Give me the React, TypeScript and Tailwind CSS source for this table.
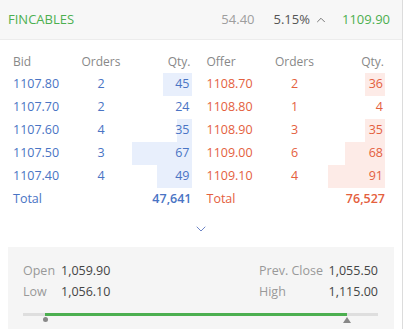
import { ChevronDown, ChevronUp } from "lucide-react";

const bids = [
  { price: "1107.80", orders: 2, qty: 45, bar: 29 },
  { price: "1107.70", orders: 2, qty: 24, bar: 0 },
  { price: "1107.60", orders: 4, qty: 35, bar: 15 },
  { price: "1107.50", orders: 3, qty: 67, bar: 60 },
  { price: "1107.40", orders: 4, qty: 49, bar: 35 },
];

const offers = [
  { price: "1108.70", orders: 2, qty: 36, bar: 20 },
  { price: "1108.80", orders: 1, qty: 4, bar: 0 },
  { price: "1108.90", orders: 3, qty: 35, bar: 20 },
  { price: "1109.00", orders: 6, qty: 68, bar: 40 },
  { price: "1109.10", orders: 4, qty: 91, bar: 57 },
];

type Row = { price: string; orders: number; qty: number; bar: number };

function Side({ title, rows, total, text, bar }: { title: string; rows: Row[]; total: string; text: string; bar: string }) {
  return (
    <div className="flex flex-col">
      <div className="grid h-[23px] grid-cols-[60px_56px_1fr] items-center text-[12px] text-[#888]">
        <span>{title}</span>
        <span className="text-center">Orders</span>
        <span className="pr-[1px] text-right">Qty.</span>
      </div>
      {rows.map((r) => (
        <div key={r.price} className={`grid h-[23px] grid-cols-[60px_56px_1fr] items-center ${text}`}>
          <span>{r.price}</span>
          <span className="text-center">{r.orders}</span>
          <span className="relative flex h-full items-center justify-end">
            <span className={`absolute top-0 right-0 bottom-0 ${bar}`} style={{ width: r.bar }} />
            <span className="relative pr-[2px]">{r.qty}</span>
          </span>
        </div>
      ))}
      <div className={`flex h-[23px] items-center justify-between ${text}`}>
        <span>Total</span>
        <span className="font-semibold">{total}</span>
      </div>
    </div>
  );
}

export default function App() {
  return (
    <div className="h-[329px] w-[406px] bg-white font-['Open_Sans',sans-serif] text-[12.5px]">
      <div className="flex h-full w-[403px] flex-col border-r border-[#dcdcdc]">
        <div className="flex h-[40px] items-center border-b border-[#ececec] bg-[#f7f7f7] pr-[12px] pl-[8px] text-[13px]">
          <span className="text-[#4caf50]">FINCABLES</span>
          <span className="ml-auto text-[#9e9e9e]">54.40</span>
          <span className="ml-[19px] text-[#555]">5.15%</span>
          <ChevronUp className="ml-[4px] h-[14px] w-[14px] text-[#666]" strokeWidth={1.5} />
          <span className="ml-[14px] text-[#4caf50]">1109.90</span>
        </div>

        <div className="mt-[10px] grid grid-cols-2 gap-[15px] pr-[17px] pl-[13px]">
          <Side title="Bid" rows={bids} total="47,641" text="text-[#4a74c4]" bar="bg-[#e8effc]" />
          <Side title="Offer" rows={offers} total="76,527" text="text-[#e4603e]" bar="bg-[#fdebe7]" />
        </div>

        <div className="flex h-[28px] items-center justify-center pt-[8px]">
          <ChevronDown className="h-[16px] w-[16px] text-[#6f86c6]" strokeWidth={1.5} />
        </div>

        <div className="mx-[8px] mt-[8px] flex-1 bg-[#f5f5f5] pt-[14px] pr-[16px] pl-[15px] text-[#444]">
          <div className="flex h-[21px] items-center">
            <span className="w-[38px] text-[#999]">Open</span>
            <span>1,059.90</span>
            <div className="ml-auto flex w-[119px] justify-between">
              <span className="text-[#999]">Prev. Close</span>
              <span>1,055.50</span>
            </div>
          </div>
          <div className="flex h-[21px] items-center">
            <span className="w-[38px] text-[#999]">Low</span>
            <span>1,056.10</span>
            <div className="ml-auto flex w-[119px] justify-between">
              <span className="text-[#999]">High</span>
              <span>1,115.00</span>
            </div>
          </div>
          <div className="relative mt-[10px] h-[3px] bg-[#dedede]">
            <div className="absolute top-0 bottom-0 left-[22px] right-[31px] bg-[#4caf50]" />
            <div className="absolute top-[4px] left-[20px] h-[5px] w-[5px] rounded-full bg-[#888]" />
            <div className="absolute top-[4px] right-[27px] h-0 w-0 border-r-[4px] border-b-[6px] border-l-[4px] border-r-transparent border-b-[#888] border-l-transparent" />
          </div>
        </div>
      </div>
    </div>
  );
}
